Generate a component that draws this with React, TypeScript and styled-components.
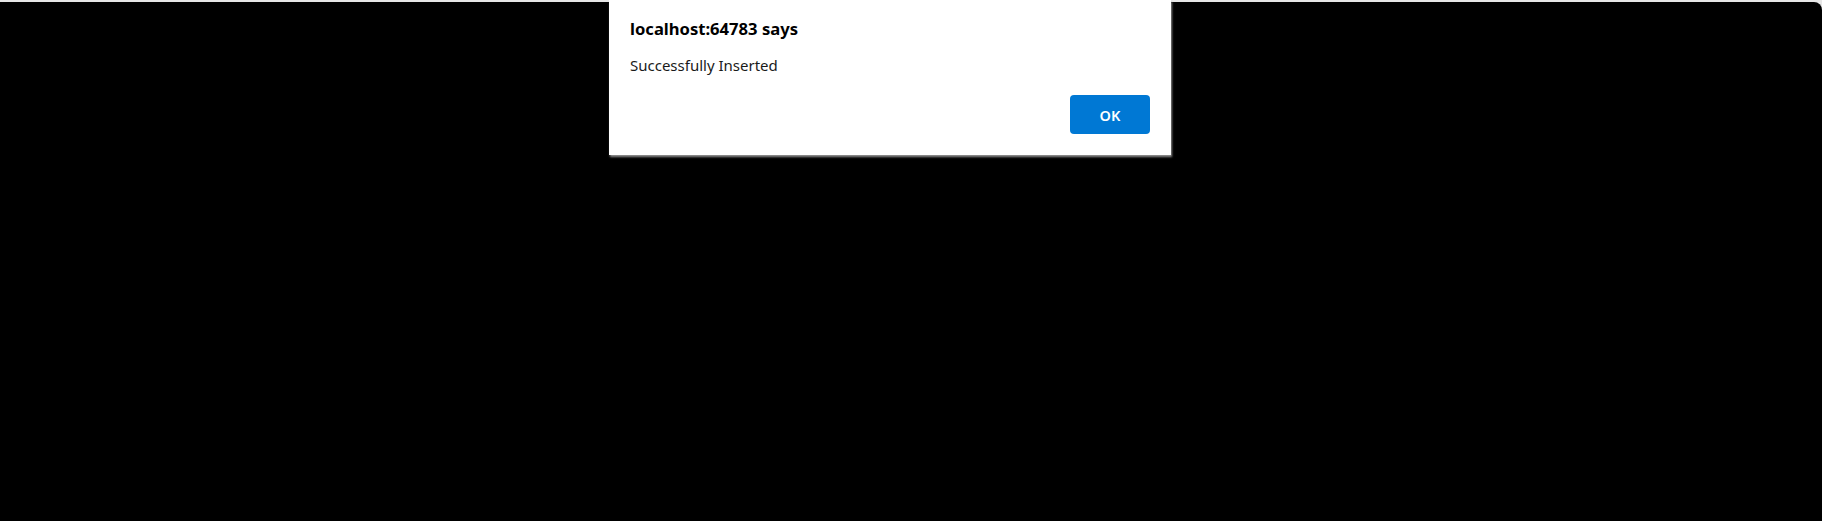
import React from 'react';
import styled, { createGlobalStyle } from 'styled-components';

const GlobalStyle = createGlobalStyle`
  html, body {
    margin: 0;
    padding: 0;
    background: #e6e6e6;
    width: 1822px;
    height: 521px;
    overflow: hidden;
  }

  #root {
    height: 100%;
  }
`;

const Stage = styled.div`
  position: relative;
  box-sizing: border-box;
  width: 1822px;
  height: 519px;
  margin-top: 2px;
  background: #000;
  border-top-right-radius: 8px;
`;

const Dialog = styled.div`
  position: absolute;
  top: -2px;
  left: 609px;
  box-sizing: border-box;
  width: 562px;
  height: 155px;
  padding: 18px 21px 21px;
  display: flex;
  flex-direction: column;
  background: #fff;
  box-shadow: 1px 2px 2px rgba(160, 160, 160, 0.9);
  font-family: "Noto Sans", "Open Sans", sans-serif;
`;

const Title = styled.div`
  font-size: 16.6px;
  font-weight: 700;
  color: #000;
  line-height: 22px;
`;

const Message = styled.div`
  margin-top: 15px;
  font-size: 15px;
  color: #1a1a1a;
  line-height: 20px;
`;

const Actions = styled.div`
  margin-top: auto;
  display: flex;
  justify-content: flex-end;
`;

const Button = styled.button`
  width: 80px;
  height: 39px;
  border: none;
  border-radius: 4px;
  background: #0078d4;
  color: #fff;
  font-family: "Noto Sans", "Open Sans", sans-serif;
  font-size: 14.5px;
  font-weight: 600;
  cursor: pointer;
`;

const App = (): JSX.Element => (
  <>
    <GlobalStyle />
    <Stage>
      <Dialog role="alertdialog">
        <Title>localhost:64783 says</Title>
        <Message>Successfully Inserted</Message>
        <Actions>
          <Button>OK</Button>
        </Actions>
      </Dialog>
    </Stage>
  </>
);

export default App;
